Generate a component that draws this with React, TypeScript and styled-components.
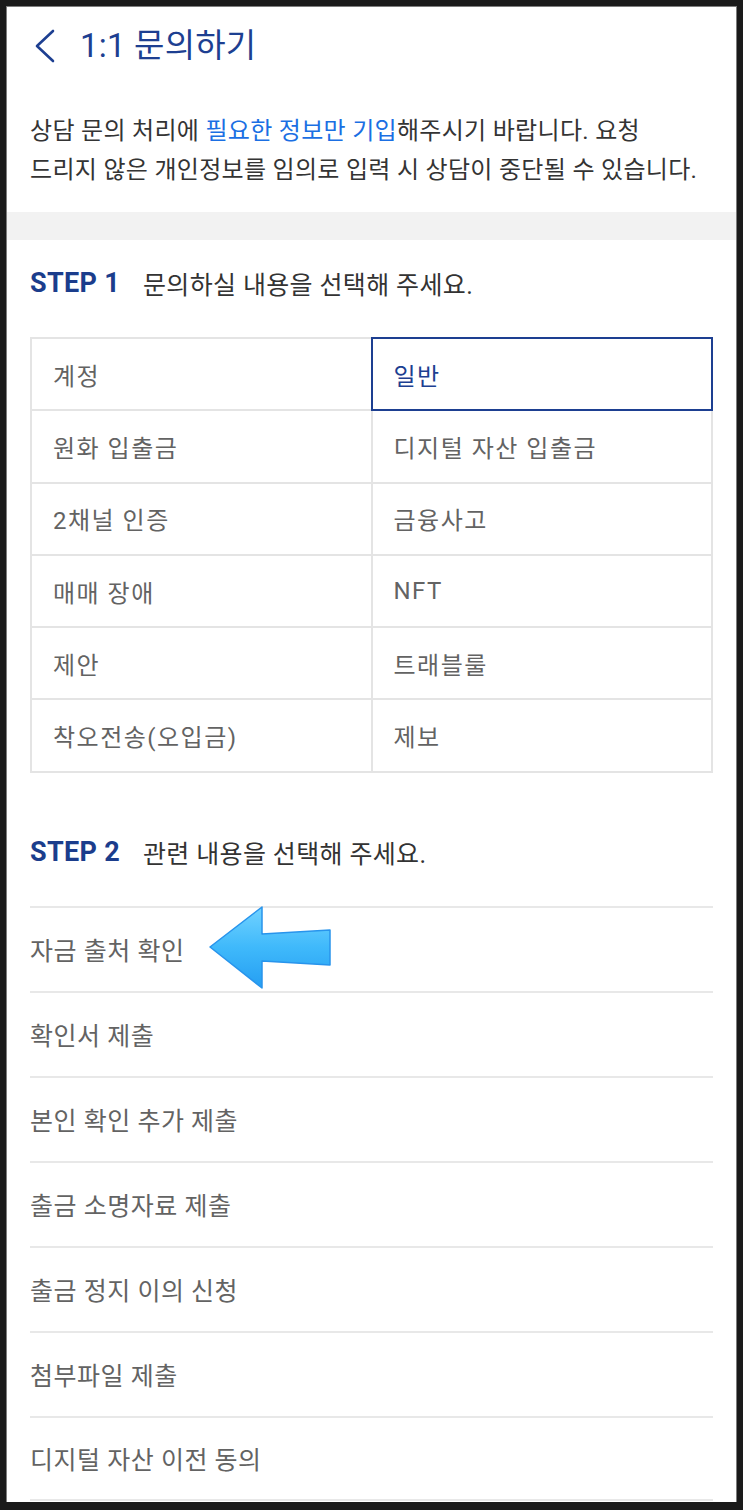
import React from "react";
import styled, { createGlobalStyle } from "styled-components";

const Global = createGlobalStyle`
  html, body { margin: 0; padding: 0; background: #1a1a1a; }
  * { box-sizing: border-box; }
  body { font-family: Roboto, "Noto Sans CJK KR", sans-serif; }
`;

const Frame = styled.div`
  width: 743px;
  height: 1510px;
  padding: 6px 6px 8px 6px;
  background: #1a1a1a;
`;

const Screen = styled.div`
  height: 100%;
  background: #ffffff;
  border: 1px solid #7d7d7d;
  border-bottom: none;
  overflow: hidden;
  display: flex;
  flex-direction: column;
`;

const Header = styled.header`
  height: 77px;
  display: flex;
  align-items: center;
  padding-left: 27px;
  gap: 24px;
  color: #1d3f91;
`;

const Title = styled.h1`
  margin: 0;
  font-size: 33px;
  font-weight: 400;
  letter-spacing: 0.2px;
  color: #1d3f91;
  line-height: 1;
`;

const Notice = styled.p`
  margin: 0;
  padding: 28px 23px 22px 23px;
  font-size: 24px;
  line-height: 39px;
  color: #343434;
  letter-spacing: 0.3px;
`;

const Highlight = styled.span`
  color: #1b6fe3;
`;

const Band = styled.div`
  height: 28px;
  background: #f2f2f2;
  flex-shrink: 0;
`;

const Section = styled.section<{ $top: number }>`
  padding: ${(p) => p.$top}px 23px 0 23px;
`;

const StepHeading = styled.h2`
  margin: 0;
  height: 34px;
  display: flex;
  align-items: center;
  gap: 23px;
  font-weight: 400;
`;

const StepLabel = styled.span`
  font-family: Roboto, sans-serif;
  font-weight: 700;
  font-size: 27px;
  color: #1b3d8c;
  letter-spacing: 0.3px;
`;

const StepText = styled.span`
  font-size: 25px;
  color: #333333;
  letter-spacing: 0.35px;
`;

const Grid = styled.div`
  margin-top: 37px;
  display: grid;
  grid-template-columns: 1fr 1fr;
  grid-auto-rows: 70.3px;
  gap: 2px;
  padding: 2px;
  background: #e4e4e4;
`;

const Cell = styled.div<{ $active?: boolean }>`
  position: relative;
  background: #ffffff;
  display: flex;
  align-items: center;
  padding-left: 21px;
  font-size: 24px;
  letter-spacing: 1.5px;
  color: ${(p) => (p.$active ? "#1d3f91" : "#636363")};
  outline: ${(p) => (p.$active ? "2px solid #1d3f91" : "none")};
`;

const List = styled.ul`
  list-style: none;
  margin: 37px 0 0 0;
  padding: 0;
`;

const Item = styled.li`
  position: relative;
  height: 85px;
  border-top: 2px solid #e8e8e8;
  display: flex;
  align-items: center;
  font-size: 25px;
  letter-spacing: 0.5px;
  color: #636363;
  &:last-child { border-bottom: 2px solid #e8e8e8; }
`;

const Pointer = styled.svg`
  position: absolute;
  left: 179px;
  top: -2px;
`;

const cells: [string, boolean?][] = [
  ["계정"],
  ["일반", true],
  ["원화 입출금"],
  ["디지털 자산 입출금"],
  ["2채널 인증"],
  ["금융사고"],
  ["매매 장애"],
  ["NFT"],
  ["제안"],
  ["트래블룰"],
  ["착오전송(오입금)"],
  ["제보"],
];

const items = [
  "자금 출처 확인",
  "확인서 제출",
  "본인 확인 추가 제출",
  "출금 소명자료 제출",
  "출금 정지 이의 신청",
  "첨부파일 제출",
  "디지털 자산 이전 동의",
];

export default function App() {
  return (
    <>
      <Global />
      <Frame>
        <Screen>
          <Header>
            <svg width="22" height="34" viewBox="0 0 22 34" fill="none">
              <path d="M19 2 L3 17 L19 32" stroke="#1d3f91" strokeWidth="2.6" strokeLinecap="round" strokeLinejoin="round" />
            </svg>
            <Title>1:1 문의하기</Title>
          </Header>
          <Notice>
            상담 문의 처리에 <Highlight>필요한 정보만 기입</Highlight>해주시기 바랍니다. 요청
            <br />
            드리지 않은 개인정보를 임의로 입력 시 상담이 중단될 수 있습니다.
          </Notice>
          <Band />
          <Section $top={26}>
            <StepHeading>
              <StepLabel>STEP 1</StepLabel>
              <StepText>문의하실 내용을 선택해 주세요.</StepText>
            </StepHeading>
            <Grid>
              {cells.map(([label, active]) => (
                <Cell key={label} $active={active}>
                  {label}
                </Cell>
              ))}
            </Grid>
          </Section>
          <Section $top={62}>
            <StepHeading>
              <StepLabel>STEP 2</StepLabel>
              <StepText>관련 내용을 선택해 주세요.</StepText>
            </StepHeading>
            <List>
              {items.map((it, i) => (
                <Item key={it}>
                  {it}
                  {i === 0 && (
                    <Pointer width="124" height="84" viewBox="0 0 124 84">
                      <defs>
                        <linearGradient id="arrowFill" x1="0" y1="0" x2="0" y2="1">
                          <stop offset="0" stopColor="#72d2ff" />
                          <stop offset="0.5" stopColor="#3fb9fb" />
                          <stop offset="1" stopColor="#259ef2" />
                        </linearGradient>
                      </defs>
                      <path
                        d="M1 41 L53 1 L53 28 L121 24 L121 59 L53 55 L53 82 Z"
                        fill="url(#arrowFill)"
                        stroke="#2894ec"
                        strokeWidth="1.5"
                        strokeLinejoin="round"
                      />
                    </Pointer>
                  )}
                </Item>
              ))}
            </List>
          </Section>
        </Screen>
      </Frame>
    </>
  );
}
